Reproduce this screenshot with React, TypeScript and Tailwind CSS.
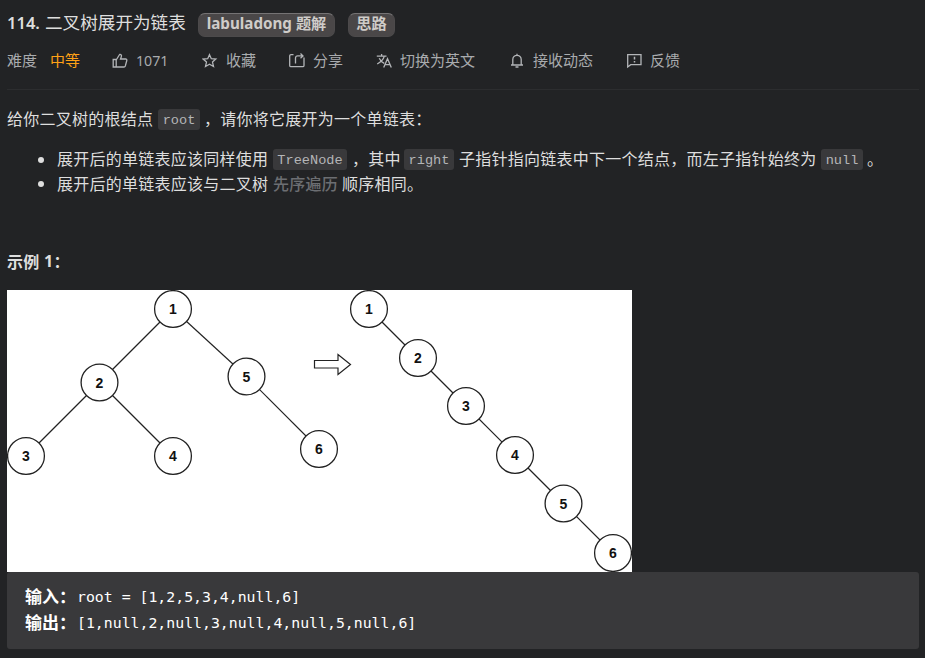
import type { ReactNode } from "react";

const SANS = "font-['Noto_Sans','Noto_Sans_CJK_SC',sans-serif]";
const CJK = "font-['Noto_Sans_CJK_SC',sans-serif]";

type Point = { n: number; x: number; y: number };

const tree: Point[] = [
  { n: 1, x: 166, y: 19 },
  { n: 2, x: 92.5, y: 92.5 },
  { n: 5, x: 239.5, y: 86.5 },
  { n: 3, x: 19, y: 166 },
  { n: 4, x: 166, y: 166 },
  { n: 6, x: 312, y: 159 },
];
const treeEdges = [[0, 1], [0, 2], [1, 3], [1, 4], [2, 5]];

const list: Point[] = [
  { n: 1, x: 362, y: 19 },
  { n: 2, x: 411, y: 68 },
  { n: 3, x: 459, y: 116 },
  { n: 4, x: 508, y: 165 },
  { n: 5, x: 556.5, y: 213.5 },
  { n: 6, x: 606, y: 263 },
];
const listEdges = [[0, 1], [1, 2], [2, 3], [3, 4], [4, 5]];

function Graph({ nodes, edges }: { nodes: Point[]; edges: number[][] }) {
  return (
    <g>
      {edges.map(([a, b]) => (
        <line key={`${a}-${b}`} x1={nodes[a].x} y1={nodes[a].y} x2={nodes[b].x} y2={nodes[b].y} stroke="#222" strokeWidth="1.15" />
      ))}
      {nodes.map((p) => (
        <g key={p.n}>
          <circle cx={p.x} cy={p.y} r="18.4" fill="#fff" stroke="#222" strokeWidth="1.3" />
          <text x={p.x} y={p.y + 5} textAnchor="middle" fontSize="14" fontWeight="700" fontFamily="Liberation Sans, sans-serif" fill="#111">
            {p.n}
          </text>
        </g>
      ))}
    </g>
  );
}

function Diagram() {
  return (
    <svg width="625" height="282" viewBox="0 0 625 282" className="block bg-white">
      <Graph nodes={tree} edges={treeEdges} />
      <path d="M307.500 70.500H331V64.500L343.500 74.500L331 84.500V78H307.500Z" fill="#fff" stroke="#222" strokeWidth="1.2" />
      <Graph nodes={list} edges={listEdges} />
    </svg>
  );
}

function Tag({ children, width }: { children: ReactNode; width: string }) {
  return (
    <span className={`flex h-6 items-center justify-center rounded-[7px] border border-[#4c4a4b] border-t-[#757374] bg-[#4a4748] pb-[3px] text-[15.200px] font-bold whitespace-nowrap text-[#cfccc9] ${width}`}>
      {children}
    </span>
  );
}

function Code({ children, width }: { children: ReactNode; width: string }) {
  return (
    <code className={`flex h-[21px] shrink-0 items-center justify-center rounded-[3px] bg-[#39393b] pt-[4px] font-['Liberation_Mono',monospace] text-[13.600px] tracking-normal text-[#b4b5b7] ${width}`}>
      {children}
    </code>
  );
}

function Icon({ children }: { children: ReactNode }) {
  return (
    <svg width="16" height="16" viewBox="0 0 16 16" fill="none" stroke="#b3b5b8" strokeWidth="1.3" className="shrink-0">
      {children}
    </svg>
  );
}

function Action({ icon, label, width }: { icon: ReactNode; label: string; width: string }) {
  return (
    <div className={`flex shrink-0 items-center gap-2 ${width}`}>
      <Icon>{icon}</Icon>
      <span>{label}</span>
    </div>
  );
}

export default function App() {
  return (
    <main className={`h-[658px] w-[925px] overflow-hidden bg-[#222325] pr-[6px] pl-[7px] text-[#dedede] ${SANS}`}>
      <header className="flex h-[50px] items-start pt-[13px]">
        <h1 className="flex h-5 w-[191px] items-center text-[17.600px] whitespace-nowrap">
          <span className="w-[38px] text-[16.500px] font-semibold">114.</span>
          <span className={`pb-px ${CJK}`}>二叉树展开为链表</span>
        </h1>
        <div className="flex gap-[13px]">
          <Tag width="w-[137px]">labuladong 题解</Tag>
          <Tag width="w-[47px]">思路</Tag>
        </div>
      </header>

      <div className="flex h-[21px] items-center text-[15px] whitespace-nowrap text-[#a9abae]">
        <span className="w-[43px]">难度</span>
        <span className="w-[62px] text-[#ffa116]">中等</span>
        <div className="flex w-[90px] shrink-0 items-center gap-2">
          <Icon>
            <path d="M1.200 6.500H4.200V14H1.200ZM4.200 7L7.600 1.500C9.300 1.200 9.800 2.500 9.300 3.700L8.500 6H13.600C14.500 6 15 6.700 14.800 7.500L13.300 13C13.100 13.600 12.600 14 12 14H4.200" />
          </Icon>
          <span className="text-[14.200px]">1071</span>
        </div>
        <Action
          width="w-[87px]"
          label="收藏"
          icon={<path d="M7.500 1.700L9.300 5.700L13.800 6.100L10.500 9.100L11.500 13.500L7.500 11.200L3.500 13.500L4.500 9.100L1.200 6.100L5.700 5.700Z" />}
        />
        <Action
          width="w-[87px]"
          label="分享"
          icon={<path d="M4.500 1.600H2A1.300 1.300 0 0 0 .700 2.900V12.400A1.300 1.300 0 0 0 2 13.700H13.700A1.300 1.300 0 0 0 15 12.400V4.500M6.500 10.500V5C6.500 3.500 7.300 2.900 8.700 2.900H14M11.500 .600L14 2.900L11.500 5.200" />}
        />
        <Action
          width="w-[133px]"
          label="切换为英文"
          icon={<path d="M.8 3.200H10.500M5.600 1V3.200M8.300 3.200C7.500 6.400 5 9 1.200 11M3.200 5.200C4.300 7.500 6 9.300 8.200 10.400M7.700 14.500L11.500 5.700L15.300 14.500M8.900 11.700H14.100" />}
        />
        <Action
          width="w-[117px]"
          label="接收动态"
          icon={<path d="M2 12H14M3.800 12V6.500A4.200 4.200 0 0 1 12.200 6.500V12M8 .8V2.500M6.500 14H9.500" />}
        />
        <Action
          width="w-[70px]"
          label="反馈"
          icon={<><path d="M1.700 1.600H15V11.700H4.700L1.700 14Z" /><path d="M8.500 3.700V6.500M8.500 8V9.500" strokeWidth="1.500" /></>}
        />
      </div>
      <div className="h-[19px] border-b border-[#2c2d2f]" />

      <section className={`pt-[18px] text-[16px] tracking-[.25px] whitespace-nowrap ${CJK}`}>
        <p className="flex h-[23px] items-center">
          <span className="w-[151px] pb-[3px]">给你二叉树的根结点</span>
          <Code width="w-[42px]">root</Code>
          <span className="pb-[3px] pl-[4px]">，请你将它展开为一个单链表：</span>
        </p>
        <ul className="mt-4 pl-[31px]">
          <li className="flex h-[25px] items-center">
            <span className="mr-[13px] size-[6px] rounded-full bg-[#dedede]" />
            <span className="w-[216px] pb-[3px]">展开后的单链表应该同样使用</span>
            <Code width="w-[74px]">TreeNode</Code>
            <span className="w-[57px] pb-[3px] pl-[5px]">，其中</span>
            <Code width="w-[50px]">right</Code>
            <span className="w-[367px] pb-[3px] pl-[5px]">子指针指向链表中下一个结点，而左子指针始终为</span>
            <Code width="w-[42px]">null</Code>
            <span className="pb-[3px] pl-[4px]">。</span>
          </li>
          <li className="flex h-[23px] items-center">
            <span className="mr-[13px] size-[6px] rounded-full bg-[#dedede]" />
            <span className="w-[216px] pb-px">展开后的单链表应该与二叉树</span>
            <span className="w-[69px] pb-px font-medium text-[#6c6e72]">先序遍历</span>
            <span className="pb-px">顺序相同。</span>
          </li>
        </ul>
        <h2 className="mt-[54px] flex h-6 items-center text-[16px] font-bold">
          <span className="w-[37px]">示例</span>
          <span className="font-['Noto_Sans',sans-serif]">1</span>
          <span>：</span>
        </h2>
      </section>

      <div className="mt-[17px]">
        <Diagram />
      </div>

      <div className="h-[77px] rounded-[3px] bg-[#39393b] pt-3 pl-[18px] whitespace-pre text-white">
        <div className="flex h-[26px] items-center">
          <strong className={`w-[52px] pb-[2px] text-[17px] ${CJK}`}>输入：</strong>
          <span className="font-['DejaVu_Sans_Mono',monospace] text-[14.830px]">root = [1,2,5,3,4,null,6]</span>
        </div>
        <div className="flex h-[26px] items-center">
          <strong className={`w-[52px] pb-[2px] text-[17px] ${CJK}`}>输出：</strong>
          <span className="font-['DejaVu_Sans_Mono',monospace] text-[14.830px]">[1,null,2,null,3,null,4,null,5,null,6]</span>
        </div>
      </div>
    </main>
  );
}
